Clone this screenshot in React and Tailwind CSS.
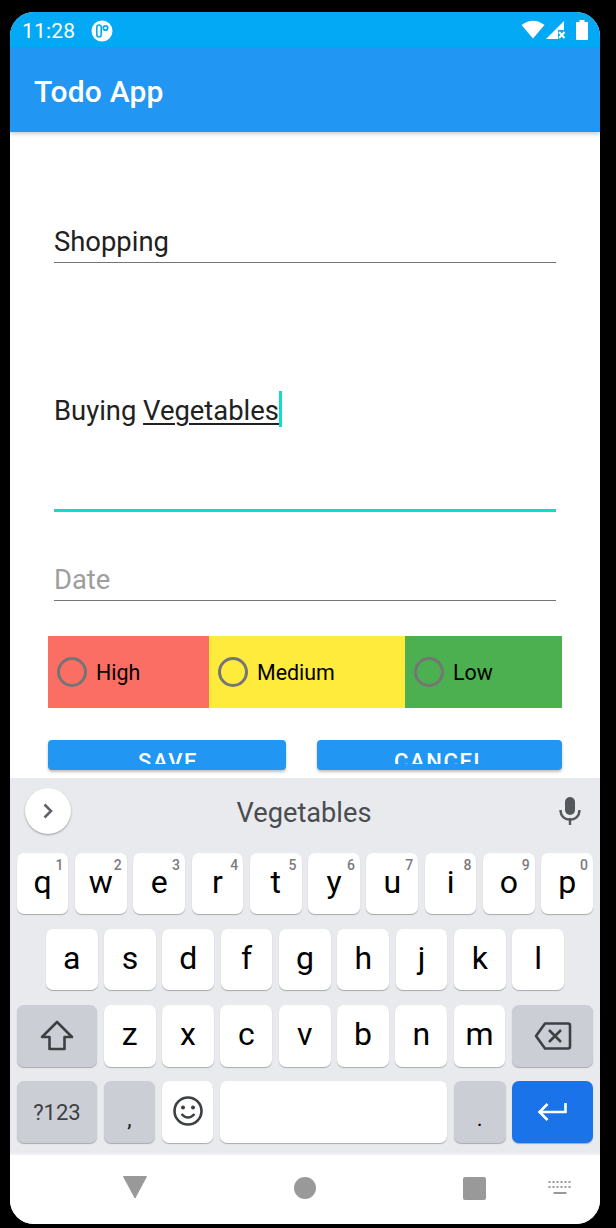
const Key = ({ children, sup, className = "" }) => (
  <div className={`relative flex items-center justify-center rounded-[7px] h-full bg-white shadow-[0_1px_1px_#a8aaad] text-[32px] leading-none text-black pb-[4px] ${className}`}>
    {sup && <span className="absolute top-[3px] right-[5px] text-[14px] leading-[18px] font-medium text-[#7a7c80]">{sup}</span>}
    {children}
  </div>
);

const Gray = ({ children, className = "" }) => (
  <div className={`flex items-center justify-center rounded-[7px] h-full bg-[#ccced5] shadow-[0_1px_1px_#a8aaad] ${className}`}>{children}</div>
);

const Radio = ({ label, className }) => (
  <div className={`flex items-center h-full ${className}`}>
    <span className="ml-[9px] w-[30px] h-[30px] rounded-full border-[3px] border-[#757575]" />
    <span className="ml-[9px] mt-[2px] text-[21.4px] leading-none text-black">{label}</span>
  </div>
);

const row1 = [["q","1"],["w","2"],["e","3"],["r","4"],["t","5"],["y","6"],["u","7"],["i","8"],["o","9"],["p","0"]];

export default function App() {
  return (
    <div className="w-[616px] h-[1228px] bg-black pt-[12px] px-[10px] overflow-hidden" style={{ fontFamily: "Roboto, sans-serif" }}>
      <div className="w-[590px] h-[1212px] rounded-[24px] overflow-hidden bg-white flex flex-col">
        <div className="h-[36px] bg-[#03a9f4] flex items-center shrink-0 text-white">
          <span className="ml-[12px] mt-[2px] text-[21px] leading-none tracking-[0.2px]">11:28</span>
          <svg className="ml-[16px] mt-[1px]" width="22" height="22" viewBox="0 0 22 22">
            <circle cx="11" cy="11" r="10.5" fill="#fff" />
            <rect x="5.8" y="5" width="4.4" height="12" rx="2.2" fill="none" stroke="#03a9f4" strokeWidth="1.6" />
            <circle cx="14.5" cy="8" r="2.2" fill="#fff" stroke="#03a9f4" strokeWidth="1.8" />
          </svg>
          <div className="ml-auto mr-[12px] flex items-center gap-[1px]">
            <svg width="24" height="20" viewBox="0 0 24 20"><path d="M0.5 5 Q12 -3.5 23.5 5 L12 18.5 Z" fill="#fff" /></svg>
            <svg width="20" height="20" viewBox="0 0 20 20">
              <path d="M0 19 L18 1 V10 H12 V19 Z" fill="#fff" />
              <path d="M13 12 L18.5 18 M18.5 12 L13 18" stroke="#fff" strokeWidth="2" fill="none" />
            </svg>
            <svg className="ml-[9px]" width="12" height="20" viewBox="0 0 12 20"><path d="M3.5 0 H8.5 V2 H11 Q12 2 12 3 V19 Q12 20 11 20 H1 Q0 20 0 19 V3 Q0 2 1 2 H3.5 Z" fill="#fff" /></svg>
          </div>
        </div>
        <div className="h-[84px] bg-[#2196f3] flex items-center shrink-0 shadow-[0_2px_4px_rgba(0,0,0,0.2)] z-10">
          <span className="ml-[24px] mt-[4px] text-[30px] leading-none font-medium tracking-[0.2px] text-white">Todo App</span>
        </div>

        <div className="h-[646px] shrink-0 overflow-hidden relative bg-white">
          <div className="mx-[44px] mt-[96px] h-[35px] border-b border-[#757575] text-[27.4px] leading-[28px] text-[#212121]">Shopping</div>
          <div className="mx-[44px] mt-[128px] h-[121px] border-b-[3px] border-[#0fdcc9] text-[27.4px] leading-[40px] text-[#212121] flex items-start">
            <span>Buying <span className="underline underline-offset-[3px] decoration-2">Vegetables</span></span>
            <span className="w-[3px] h-[36px] bg-[#0fdcc9]" />
          </div>
          <div className="mx-[44px] mt-[53px] h-[36px] border-b border-[#757575] text-[27.4px] leading-[30px] text-[#9e9e9e]">Date</div>
          <div className="mx-[38px] mt-[35px] h-[72px] flex">
            <Radio label="High" className="w-[161px] bg-[#fb6e64]" />
            <Radio label="Medium" className="w-[196px] bg-[#ffeb3b]" />
            <Radio label="Low" className="w-[157px] bg-[#4caf50]" />
          </div>
          <div className="mx-[38px] mt-[32px] flex justify-between">
            {[["SAVE", "w-[238px]"], ["CANCEL", "w-[245px]"]].map(([t, w]) => (
              <div key={t} className={`${w} h-[30px] rounded-[4px] bg-[#2196f3] shadow-[0_2px_3px_rgba(0,0,0,0.25)]`}>
                <div className="h-[24px] overflow-hidden flex justify-center">
                  <span className="mt-[9px] ml-[2px] text-[22px] leading-[26px] font-medium tracking-[1.6px] text-white">{t}</span>
                </div>
              </div>
            ))}
          </div>
        </div>

        <div className="h-[375px] shrink-0 bg-[#e8eaed] flex flex-col">
          <div className="h-[75px] relative flex items-center justify-center shrink-0">
            <div className="absolute left-[15px] top-[10px] w-[46px] h-[46px] rounded-full bg-white shadow-[0_1px_2px_rgba(0,0,0,0.35)] flex items-center justify-center">
              <svg width="14" height="18" viewBox="0 0 14 18"><path d="M3.5 2.5 L10 9 L3.5 15.5" fill="none" stroke="#5f6368" strokeWidth="2.6" /></svg>
            </div>
            <span className="text-[27.2px] leading-none text-[#494c50] -mt-[4px] -ml-[2px]">Vegetables</span>
            <svg className="absolute right-[18px] top-[18px]" width="24" height="30" viewBox="0 0 24 30">
              <rect x="7" y="1" width="10" height="18" rx="5" fill="#54575b" />
              <path d="M2.5 14 C2.5 27 21.5 27 21.5 14" fill="none" stroke="#54575b" strokeWidth="2.4" />
              <rect x="10.8" y="22" width="2.4" height="7" fill="#54575b" />
            </svg>
          </div>
          <div className="pl-[6.7px] pr-[6.9px] h-[61px] flex gap-[6.6px] shrink-0">
            {row1.map(([k, s]) => <Key key={k} sup={s} className="flex-1">{k}</Key>)}
          </div>
          <div className="mt-[15px] pl-[35.9px] pr-[36.1px] h-[61px] flex gap-[6.6px] shrink-0">
            {"asdfghjkl".split("").map((k) => <Key key={k} className="flex-1">{k}</Key>)}
          </div>
          <div className="mt-[15px] pl-[6.7px] pr-[6.9px] h-[61.5px] flex gap-[6.6px] shrink-0">
            <Gray className="w-[80.5px] shrink-0">
              <svg width="36" height="34" viewBox="0 0 36 34"><path d="M18 3 L33 18 H25.5 V30 H10.5 V18 H3 Z" fill="none" stroke="#3c4043" strokeWidth="2.6" strokeLinejoin="round" /></svg>
            </Gray>
            {"zxcvbnm".split("").map((k) => <Key key={k} className="flex-1">{k}</Key>)}
            <Gray className="w-[81px] shrink-0">
              <svg width="38" height="30" viewBox="0 0 38 30"><path d="M11 2.5 H34 Q36 2.5 36 4.5 V25.5 Q36 27.5 34 27.5 H11 L2 15 Z" fill="none" stroke="#3c4043" strokeWidth="2.6" strokeLinejoin="round" /><path d="M15 9 L27 21 M27 9 L15 21" stroke="#3c4043" strokeWidth="2.6" /></svg>
            </Gray>
          </div>
          <div className="mt-[14.5px] pl-[6.7px] pr-[6.9px] h-[62px] flex gap-[6.6px] shrink-0">
            <Gray className="w-[80.5px] shrink-0 text-[22px] text-[#3c4043]">?123</Gray>
            <Gray className="w-[51.5px] shrink-0 text-[22px] text-[#202124] items-end pb-[8px]">,</Gray>
            <Key className="w-[51.5px] shrink-0">
              <svg className="mt-[2px]" width="32" height="32" viewBox="0 0 32 32"><circle cx="16" cy="16" r="13.5" fill="none" stroke="#3c4043" strokeWidth="2.6" /><circle cx="11" cy="12.5" r="2" fill="#3c4043" /><circle cx="21" cy="12.5" r="2" fill="#3c4043" /><path d="M9.5 19 Q16 26 22.5 19" fill="none" stroke="#3c4043" strokeWidth="2.4" /></svg>
            </Key>
            <Key className="flex-1" />
            <Gray className="w-[51.5px] shrink-0 text-[22px] text-black items-end pb-[8px]">.</Gray>
            <div className="w-[81px] shrink-0 h-full rounded-[7px] bg-[#1a73e8] shadow-[0_1px_1px_#a8aaad] flex items-center justify-center">
              <svg className="-ml-[2px]" width="30" height="20" viewBox="0 0 30 20"><path d="M28.5 1 V10 H3 M10.5 2 L2.5 10 L10.5 18" fill="none" stroke="#fff" strokeWidth="2.6" /></svg>
            </div>
          </div>
        </div>

        <div className="flex-1 bg-white border-t-2 border-[#f0f1f2] relative flex items-center">
          <svg className="absolute left-[111.5px] top-[20px]" width="26" height="24" viewBox="0 0 26 24"><path d="M1.5 1.5 H24.5 L13 23 Z" fill="#999" stroke="#999" strokeLinejoin="round" /></svg>
          <span className="absolute left-[284px] top-[22px] w-[22px] h-[22px] rounded-full bg-[#999]" />
          <span className="absolute left-[453px] top-[22px] w-[23px] h-[23px] rounded-[2px] bg-[#999]" />
          <svg className="absolute left-[538px] top-[26px]" width="24" height="14" viewBox="0 0 24 14">
            <path d="M0.5 1 H23.5 M0.5 6 H23.5" stroke="#999" strokeWidth="2.2" strokeDasharray="2 2" fill="none" />
            <rect x="5.5" y="11" width="13" height="2" fill="#999" />
          </svg>
        </div>
      </div>
    </div>
  );
}
